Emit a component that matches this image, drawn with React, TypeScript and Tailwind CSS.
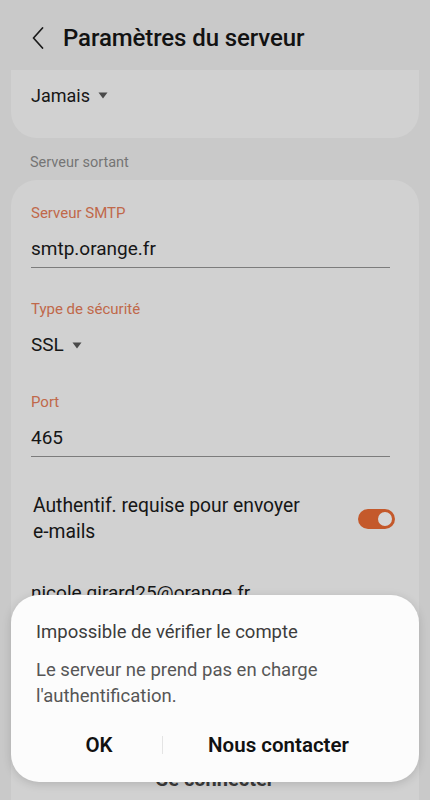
import React from 'react';

const Caret = () => (
  <svg width="10" height="7" viewBox="0 0 10 7" className="ml-[8px] mt-[1px]">
    <path d="M0.5 0.5 H9.5 L5 6.5 Z" fill="#4a4a4a" />
  </svg>
);

const Field = ({ label, value, underline = true }: { label: string; value: React.ReactNode; underline?: boolean }) => (
  <div className="pl-[20px] pr-[29px]">
    <div className="h-[20px] text-[15px] leading-[20px] text-[#c0684a]">{label}</div>
    <div className={`mt-[13px] ${underline ? 'pb-[5px] border-b border-[#7c7c7c]' : ''}`}>
      <div className="h-[26px] flex items-center text-[19px] leading-[26px] text-[#161616]">{value}</div>
    </div>
  </div>
);

export default function App() {
  return (
    <div
      className="relative w-[430px] h-[800px] overflow-hidden bg-[#c9c9c9]"
      style={{ fontFamily: 'Roboto, "Noto Sans", sans-serif' }}
    >
      {/* header */}
      <div className="h-[70px] pt-[6px] pl-[32px] flex items-center">
        <svg width="12" height="22" viewBox="0 0 12 22" fill="none">
          <path d="M10.5 1 L1.5 11 L10.5 21" stroke="#1a1a1a" strokeWidth="1.7" strokeLinecap="round" strokeLinejoin="round" />
        </svg>
        <h1 className="ml-[19px] text-[24px] font-medium text-[#121212] tracking-[-0.1px]">Paramètres du serveur</h1>
      </div>

      {/* previous card (scrolled) */}
      <div className="mx-[11px] h-[68px] rounded-b-[26px] bg-[#d1d1d1] pt-[13px] pl-[20px]">
        <div className="h-[24px] flex items-center text-[18px] text-[#161616]">
          Jamais
          <Caret />
        </div>
      </div>

      <div className="h-[42px] pt-[8px] pl-[30px] flex items-center text-[14.5px] text-[#757575]">Serveur sortant</div>

      {/* outgoing server card */}
      <div className="mx-[11px] h-[700px] rounded-t-[26px] bg-[#d1d1d1] pt-[23px]">
        <Field label="Serveur SMTP" value="smtp.orange.fr" />
        <div className="mt-[31px]">
          <Field
            label="Type de sécurité"
            underline={false}
            value={
              <>
                SSL
                <Caret />
              </>
            }
          />
        </div>
        <div className="mt-[34px]">
          <Field label="Port" value="465" />
        </div>

        <div className="mt-[36px] pl-[22px] pr-[24px] flex items-center justify-between">
          <div className="text-[19.3px] leading-[26px] text-[#161616]">
            Authentif. requise pour envoyer
            <br />
            e-mails
          </div>
          <div className="relative w-[37px] h-[20px] rounded-full bg-[#c4592b]">
            <div className="absolute right-[1px] top-[1px] w-[18px] h-[18px] rounded-full bg-[#d6d6d6] border-[2px] border-[#c4592b]" />
          </div>
        </div>

        <div className="mt-[35px] pl-[20px] h-[26px] text-[19px] leading-[26px] text-[#161616]">nicole.girard25@orange.fr</div>

        <div className="mt-[158px] text-center text-[20px] font-bold text-[#3a3a3a]">Se connecter</div>
      </div>

      {/* dialog */}
      <div className="absolute left-[11px] right-[11px] top-[595px] h-[187px] rounded-[28px] bg-[#fcfcfc] shadow-[0_2px_10px_rgba(0,0,0,0.15)] pt-[26px] px-[25px]">
        <div className="h-[24px] flex items-center text-[18.5px] text-[#3d3d3d]">Impossible de vérifier le compte</div>
        <div className="mt-[12px] text-[18.5px] leading-[26px] text-[#565656]">
          Le serveur ne prend pas en charge
          <br />
          l'authentification.
        </div>
        <div className="mt-[16px] h-[40px] flex items-center">
          <button className="w-[126px] text-center text-[20.5px] font-semibold text-[#111]">OK</button>
          <div className="w-px h-[18px] bg-[#e4e4e4]" />
          <button className="flex-1 text-center text-[20.5px] font-semibold text-[#111]">Nous contacter</button>
        </div>
      </div>
    </div>
  );
}
